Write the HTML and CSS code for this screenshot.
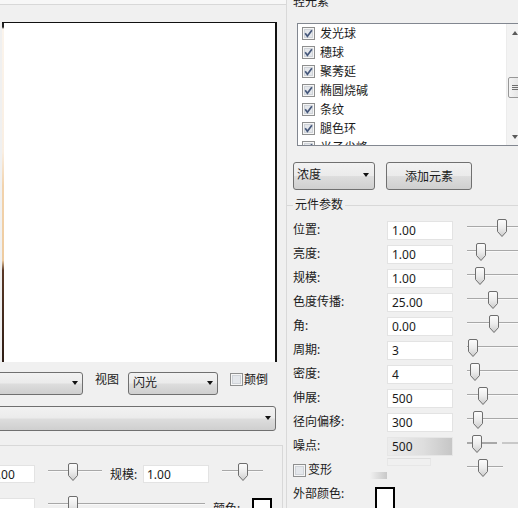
FILE: index.html
```html
<!DOCTYPE html>
<html lang="zh">
<head>
<meta charset="utf-8">
<title>元件参数</title>
<link rel="stylesheet" href="styles.css">
</head>
<body>
<svg class="defs" aria-hidden="true">
  <defs>
    <linearGradient id="thumbfill" x1="0" y1="0" x2="0" y2="1">
      <stop offset="0" stop-color="#fdfdfd"/>
      <stop offset="0.5" stop-color="#ececec"/>
      <stop offset="1" stop-color="#cbcbcb"/>
    </linearGradient>
    <symbol id="thumb" viewBox="0 0 10 18">
      <path d="M0.5 2Q0.5 0.5 2 0.5H8Q9.5 0.5 9.5 2V12.5L5 17.5L0.5 12.5Z" fill="url(#thumbfill)" stroke="#6e6e6e"/>
    </symbol>
    <symbol id="cb-off" viewBox="0 0 13 13">
      <rect x="0.5" y="0.5" width="12" height="12" fill="#f6f6f6" stroke="#8e8f8f"/>
      <rect x="2.5" y="2.5" width="8" height="8" fill="#e4e7eb" stroke="#cfd3d8"/>
    </symbol>
    <symbol id="cb-on" viewBox="0 0 13 13">
      <rect x="0.5" y="0.5" width="12" height="12" fill="#f6f6f6" stroke="#8e8f8f"/>
      <rect x="2.5" y="2.5" width="8" height="8" fill="#e4e7eb" stroke="#cfd3d8"/>
      <path d="M3.2 6.3L5.4 9.3L9.9 3.3" fill="none" stroke="#46587b" stroke-width="1.7"/>
    </symbol>
  </defs>
</svg>
<div class="app">
  <div class="left">
    <div class="topbar"></div>
    <div class="canvas"><div class="edge"></div></div>
    <div class="viewrow">
      <div class="combo combo-a"><span></span><i class="arrow"></i></div>
      <span class="lbl-view">视图</span>
      <div class="combo combo-b"><span>闪光</span><i class="arrow"></i></div>
      <svg class="cb cb-flip"><use href="#cb-off"/></svg>
      <span class="lbl-flip">颠倒</span>
    </div>
    <div class="combo combo-c"><span></span><i class="arrow"></i></div>
    <div class="lgroup">
      <div class="lrow">
        <div class="field f-edge">1.00</div>
        <div class="slider ls-a"><div class="track"></div><svg class="thumb" style="left:20px"><use href="#thumb"/></svg></div>
        <span class="llabel">规模:</span>
        <div class="field f-scale">1.00</div>
        <div class="slider ls-b"><div class="track"></div><svg class="thumb" style="left:16px"><use href="#thumb"/></svg></div>
      </div>
      <div class="lrow">
        <div class="field f-edge"></div>
        <div class="slider ls-c"><div class="track"></div><svg class="thumb" style="left:20px"><use href="#thumb"/></svg></div>
        <span class="llabel llabel-color">颜色:</span>
        <div class="swatch"></div>
      </div>
    </div>
  </div>

  <div class="right">
    <div class="gtitle">轻元素</div>
    <div class="list">
      <div class="items">
        <div class="item"><svg class="cb"><use href="#cb-on"/></svg><span>发光球</span></div>
        <div class="item"><svg class="cb"><use href="#cb-on"/></svg><span>穗球</span></div>
        <div class="item"><svg class="cb"><use href="#cb-on"/></svg><span>聚莠延</span></div>
        <div class="item"><svg class="cb"><use href="#cb-on"/></svg><span>椭圆烧碱</span></div>
        <div class="item"><svg class="cb"><use href="#cb-on"/></svg><span>条纹</span></div>
        <div class="item"><svg class="cb"><use href="#cb-on"/></svg><span>腿色环</span></div>
        <div class="item"><svg class="cb"><use href="#cb-on"/></svg><span>光子尖峰</span></div>
      </div>
      <div class="vscroll">
        <div class="sbtn"><i class="up"></i></div>
        <div class="sthumb"><i></i><i></i><i></i></div>
        <div class="sbtn sbtn-down"><i class="down"></i></div>
      </div>
    </div>

    <div class="actions">
      <div class="combo combo-d"><span>浓度</span><i class="arrow"></i></div>
      <div class="btn">添加元素</div>
    </div>

    <div class="params">
      <div class="ptitle">元件参数</div>
      <div class="prows">
        <div class="prow"><span class="plabel">位置:</span><div class="field pfield">1.00</div><div class="slider pslider"><div class="track"></div><svg class="thumb" style="left:30px"><use href="#thumb"/></svg></div></div>
        <div class="prow"><span class="plabel">亮度:</span><div class="field pfield">1.00</div><div class="slider pslider"><div class="track"></div><svg class="thumb" style="left:9px"><use href="#thumb"/></svg></div></div>
        <div class="prow"><span class="plabel">规模:</span><div class="field pfield">1.00</div><div class="slider pslider"><div class="track"></div><svg class="thumb" style="left:8px"><use href="#thumb"/></svg></div></div>
        <div class="prow"><span class="plabel">色度传播:</span><div class="field pfield">25.00</div><div class="slider pslider"><div class="track"></div><svg class="thumb" style="left:21px"><use href="#thumb"/></svg></div></div>
        <div class="prow"><span class="plabel">角:</span><div class="field pfield">0.00</div><div class="slider pslider"><div class="track"></div><svg class="thumb" style="left:22px"><use href="#thumb"/></svg></div></div>
        <div class="prow"><span class="plabel">周期:</span><div class="field pfield">3</div><div class="slider pslider"><div class="track"></div><svg class="thumb" style="left:1px"><use href="#thumb"/></svg></div></div>
        <div class="prow"><span class="plabel">密度:</span><div class="field pfield">4</div><div class="slider pslider"><div class="track"></div><svg class="thumb" style="left:3px"><use href="#thumb"/></svg></div></div>
        <div class="prow"><span class="plabel">伸展:</span><div class="field pfield">500</div><div class="slider pslider"><div class="track"></div><svg class="thumb" style="left:11px"><use href="#thumb"/></svg></div></div>
        <div class="prow"><span class="plabel">径向偏移:</span><div class="field pfield">300</div><div class="slider pslider"><div class="track"></div><svg class="thumb" style="left:6px"><use href="#thumb"/></svg></div></div>
        <div class="prow"><span class="plabel">噪点:</span><div class="field pfield pfield-dim">500</div><div class="slider pslider"><div class="track track-gap"></div><svg class="thumb" style="left:5px"><use href="#thumb"/></svg></div></div>
        <div class="prow">
          <span class="plabel plabel-check"><svg class="cb"><use href="#cb-off"/></svg><span class="cbtext">变形</span><i class="smudge"></i></span>
          <div class="ghost"></div>
          <div class="slider pslider pslider-ghost"><div class="track track-short"></div><svg class="thumb" style="left:11px"><use href="#thumb"/></svg></div>
        </div>
        <div class="prow"><span class="plabel plabel-color">外部颜色:</span><div class="swatch swatch-outer"></div></div>
      </div>
    </div>
  </div>
</div>
</body>
</html>
```

FILE: styles.css
```css
* { box-sizing: border-box; margin: 0; padding: 0; }

html, body { width: 518px; height: 508px; overflow: hidden; }

body {
  background: #f0f0f0;
  color: #1b1b1b;
  font: 12px/16px "Noto Sans", "Noto Sans CJK SC", sans-serif;
}

.defs { display: block; width: 0; height: 0; overflow: hidden; }

.app {
  display: grid;
  grid-template-columns: 286px 232px;
  height: 508px;
}

/* ---------- left column ---------- */
.left { min-width: 0; }

.topbar {
  height: 5px;
  background: #f7f7f7;
  border-bottom: 1px solid #d8d8d8;
}

.canvas {
  display: flex;
  height: 340px;
  margin: 17px 9px 0 2px;
  background: #fff;
  border-top: 1px solid #111;
  border-right: 2px solid #111;
}

.edge {
  width: 2px;
  background: linear-gradient(#222 0, #222 4px, #fbf4ec 6px, #f9eee2 38%, #f2d3ad 48%, #eecb9f 70%, #5a3826 73%, #2e1d15 100%);
}

.viewrow {
  display: flex;
  align-items: flex-start;
  height: 23px;
  margin-top: 10px;
}

.combo {
  display: flex;
  align-items: center;
  height: 23px;
  padding: 0 4px 1px 4px;
  border: 1px solid #707070;
  border-radius: 3px;
  background: linear-gradient(#f2f2f2, #ebebeb 48%, #dddddd 52%, #cfcfcf);
}

.combo span { flex: 1; }

.arrow {
  width: 0;
  height: 0;
  border-left: 3.5px solid transparent;
  border-right: 3.5px solid transparent;
  border-top: 4px solid #111;
}

.combo-a { width: 103px; margin-left: -20px; }
.lbl-view { width: 24px; margin-left: 12px; }
.combo-b { width: 90px; margin-left: 9px; }
.cb { width: 13px; height: 13px; flex: none; }
.cb-flip { margin: 1px 0 0 12px; }
.lbl-flip { margin-left: 1px; }

.combo-c {
  width: 286px;
  height: 25px;
  margin: 11px 0 0 -10px;
}

.lgroup {
  width: 295px;
  height: 80px;
  margin: 14px 0 0 -12px;
  padding-top: 19px;
  border-top: 1px solid #d8d8d8;
  border-right: 1px solid #d8d8d8;
}

.lrow {
  display: flex;
  align-items: flex-start;
  height: 33px;
}

.field {
  height: 19px;
  padding: 0 4px;
  line-height: 17px;
  background: #fff;
  border: 1px solid #e3e3e3;
  flex: none;
}

.f-edge { width: 50px; height: 18px; margin-left: -3px; padding-left: 5px; }
.f-scale { width: 66px; height: 18px; padding-left: 3px; }

.slider { position: relative; height: 18px; flex: none; }

.track {
  position: absolute;
  left: 0;
  right: 0;
  top: 7px;
  height: 2px;
  border-top: 1px solid #a8a8a8;
  border-bottom: 1px solid #f9f9f9;
}

.thumb { position: absolute; top: 0; width: 10px; height: 18px; }

.ls-a { width: 54px; margin: -2px 0 0 13px; }
.ls-b { width: 41px; margin: -2px 0 0 13px; }
.ls-c { width: 157px; margin: -2px 0 0 13px; }

.llabel { width: 33px; margin: 2px 0 0 8px; flex: none; }
.llabel-color { width: 39px; margin-top: 3px; }

.swatch {
  width: 20px;
  height: 26px;
  background: #fff;
  border: 2px solid #000;
  flex: none;
}

/* ---------- right column ---------- */
.right {
  min-width: 0;
  border-left: 1px solid #d9d9d9;
}

.gtitle { height: 16px; margin: -6px 0 0 6px; }

.list {
  display: flex;
  width: 227px;
  height: 123px;
  margin: 13px 0 0 10px;
  background: #fff;
  border: 1px solid #828790;
}

.items { flex: 1; overflow: hidden; }

.item {
  display: flex;
  align-items: center;
  height: 19px;
  padding-left: 4px;
  white-space: nowrap;
}

.item .cb { margin-right: 5px; }

.vscroll {
  display: flex;
  flex-direction: column;
  width: 17px;
  flex: none;
  background: #f3f3f3;
  border-left: 1px solid #ececec;
}

.sbtn {
  display: flex;
  align-items: center;
  justify-content: center;
  height: 17px;
}

.sbtn-down { margin-top: auto; }

.up, .down {
  width: 0;
  height: 0;
  border-left: 3.5px solid transparent;
  border-right: 3.5px solid transparent;
}

.up { border-bottom: 4px solid #5a5a5a; }
.down { border-top: 4px solid #5a5a5a; }

.sthumb {
  display: flex;
  flex-direction: column;
  align-items: center;
  justify-content: center;
  gap: 1px;
  height: 21px;
  margin: 36px 1px 0;
  border: 1px solid #979797;
  border-radius: 2px;
  background: linear-gradient(90deg, #f4f4f4, #e2e2e2);
}

.sthumb i { width: 6px; height: 1px; background: #6f6f6f; }

.actions {
  display: flex;
  gap: 11px;
  margin: 16px 0 0 6px;
}

.combo-d {
  width: 82px;
  height: 28px;
  padding: 0 5px 3px 3px;
}

.btn {
  display: flex;
  align-items: center;
  justify-content: center;
  width: 86px;
  height: 28px;
  padding-top: 1px;
  border: 1px solid #707070;
  border-radius: 3px;
  background: linear-gradient(#f2f2f2, #ebebeb 48%, #dddddd 52%, #cfcfcf);
}

.params {
  margin-top: 15px;
  border-top: 1px solid #d8d8d8;
}

.ptitle {
  width: fit-content;
  margin: -9px 0 0 6px;
  padding: 0 2px;
  background: #f0f0f0;
}

.prows { margin-top: 5px; }

.prow {
  display: flex;
  align-items: center;
  height: 24px;
  padding-left: 6px;
}

.plabel { width: 94px; flex: none; }
.pfield { width: 66px; padding-left: 4px; }

.pfield-dim {
  background: linear-gradient(90deg, #ececec, #dedede 55%, #c6c6c6);
  border-color: #e6e6e6;
}

.pslider {
  flex: 1;
  align-self: flex-start;
  margin: 1px 0 0 14px;
}

.track-gap {
  background: none;
  border-image: linear-gradient(90deg, #a8a8a8 0, #a8a8a8 58%, transparent 58%, transparent 68%, #c8c8c8 68%) 1;
}

.track-short { right: auto; width: 36px; }

.plabel-check { display: flex; align-items: center; }
.cbtext { margin-left: 2px; }

.smudge {
  width: 17px;
  height: 7px;
  margin: 11px 0 0 38px;
  background: linear-gradient(90deg, #f0f0f0, #d4d4d4 70%, #c8c8c8);
}

.ghost {
  width: 44px;
  height: 8px;
  align-self: flex-start;
  margin-top: 0;
  border: 1px solid #e7e7e7;
  border-top-color: #dedede;
  flex: none;
}

.pslider-ghost { margin-left: 36px; }

.plabel-color { width: 82px; }

.swatch-outer {
  align-self: flex-start;
  height: 30px;
  margin-top: 5px;
}
```
